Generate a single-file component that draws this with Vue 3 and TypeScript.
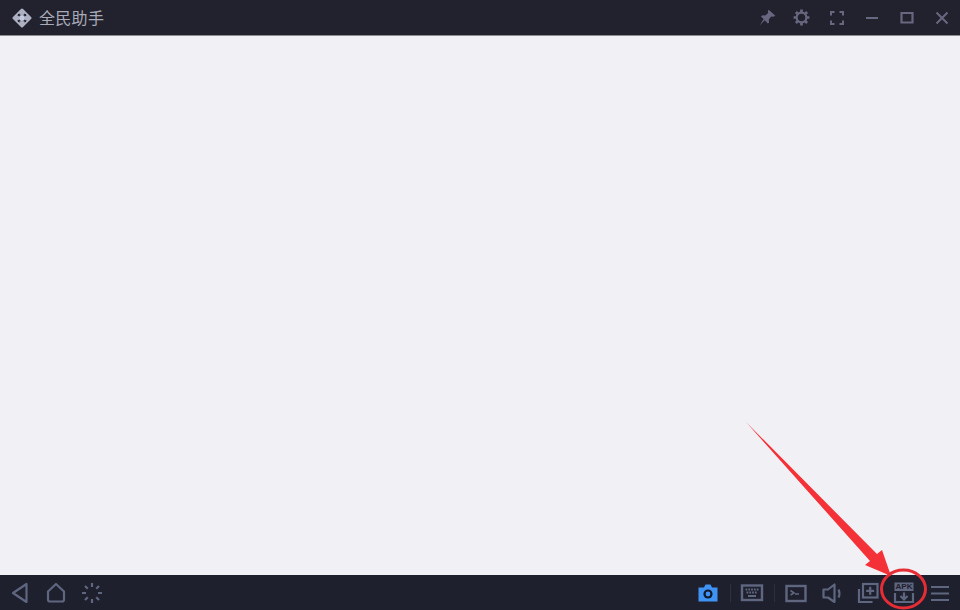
<template>
  <div class="window">
    <header class="titlebar">
      <div class="brand">
        <svg class="logo" width="20" height="20" viewBox="0 0 20 20" aria-hidden="true">
          <path d="M10 2 18 10 10 18 2 10Z" fill="#aeb1c1" stroke="#aeb1c1" stroke-width="3" stroke-linejoin="round" />
          <path d="M5.800 6.800Q10 9 14.200 6.800M5.800 13.200Q10 11 14.200 13.200M6.800 5.800Q9 10 6.800 14.200M13.200 5.800Q11 10 13.200 14.200" fill="none" stroke="#22222f" stroke-width="1.600" />
          <circle cx="10" cy="10" r="3" fill="#c3c9de" />
        </svg>
        <span class="brand-name">全民助手</span>
      </div>
      <div class="window-tools">
        <button class="tool" aria-label="pin">
          <svg width="20" height="20" viewBox="0 0 18 18"><path d="M10.500 1.500 16.500 7 14.800 7.800 12.800 7.600 10.600 10.300 10.900 13 9.800 14 7 11 2.500 15.500 6 10 3.600 7.600 5 6.600 7.400 6.800 10 4.600 9.800 2.800Z" fill="#67677f" /></svg>
        </button>
        <button class="tool" aria-label="settings">
          <svg width="19" height="19" viewBox="0 0 18 18" fill="none" stroke="#67677f"><circle cx="9" cy="9" r="4.600" stroke-width="2" /><path d="M9 1.500V4M9 14V16.500M1.500 9H4M14 9H16.500M3.700 3.700 5.400 5.400M12.600 12.600 14.300 14.300M3.700 14.300 5.400 12.600M12.600 5.400 14.300 3.700" stroke-width="2.600" /></svg>
        </button>
        <button class="tool" aria-label="fullscreen">
          <svg width="18" height="18" viewBox="0 0 18 18" fill="none" stroke="#67677f" stroke-width="2"><path d="M3 6.500V3H6.500M11.500 3H15V6.500M15 11.500V15H11.500M6.500 15H3V11.500" /></svg>
        </button>
        <button class="tool" aria-label="minimize">
          <svg width="18" height="18" viewBox="0 0 18 18" fill="none" stroke="#67677f" stroke-width="2"><path d="M3 9H15" /></svg>
        </button>
        <button class="tool" aria-label="maximize">
          <svg width="18" height="18" viewBox="0 0 18 18" fill="none" stroke="#67677f" stroke-width="2.200"><path d="M3.500 4H14.500V13.500H3.500Z" /></svg>
        </button>
        <button class="tool" aria-label="close">
          <svg width="18" height="18" viewBox="0 0 18 18" fill="none" stroke="#67677f" stroke-width="2"><path d="M3.500 3.500 14.500 14.500M14.500 3.500 3.500 14.500" /></svg>
        </button>
      </div>
    </header>

    <main class="screen"></main>

    <footer class="navbar">
      <div class="nav-left">
        <button class="nav-btn side" aria-label="back">
          <svg width="24" height="24" viewBox="0 0 24 24" fill="none" stroke="#5f6680" stroke-width="2.200"><path d="M19.500 3V21L6 12Z" stroke-linejoin="round" /></svg>
        </button>
        <button class="nav-btn side" aria-label="home">
          <svg width="24" height="24" viewBox="0 0 24 24" fill="none" stroke="#5f6680" stroke-width="2.200"><path d="M4 10.500 12 3 20 10.500V18.500Q20 20.500 18 20.500H6Q4 20.500 4 18.500Z" stroke-linejoin="round" /></svg>
        </button>
        <button class="nav-btn side" aria-label="recent">
          <svg width="24" height="24" viewBox="0 0 24 24" fill="none" stroke="#5f6680" stroke-width="2.200"><path d="M12 2V6M12 18V22M2 12H6M18 12H22M5 5 7.800 7.800M16.200 16.200 19 19M5 19 7.800 16.200M16.200 7.800 19 5" /></svg>
        </button>
      </div>
      <div class="nav-right">
        <button class="nav-btn" aria-label="screenshot">
          <svg width="24" height="24" viewBox="0 0 24 24"><path d="M2.500 6.500H8L9.500 3.500H14.500L16 6.500H21.500V20.500H2.500Z" fill="#3f93f4" /><circle cx="12" cy="13" r="4.600" fill="#12182a" /><circle cx="12" cy="13" r="2.400" fill="#3f93f4" /></svg>
        </button>
        <span class="sep"></span>
        <button class="nav-btn" aria-label="keyboard">
          <svg width="24" height="24" viewBox="0 0 24 24" fill="none" stroke="#5f6680"><rect x="2" y="4.500" width="20" height="14.500" stroke-width="2.400" /><path d="M5.500 8.500H18.500M6.500 11.500H17.500" stroke-width="1.800" stroke-dasharray="1.800 1" /><path d="M8 15H16" stroke-width="2" /></svg>
        </button>
        <span class="sep"></span>
        <button class="nav-btn" aria-label="console">
          <svg width="24" height="24" viewBox="0 0 24 24" fill="none" stroke="#5f6680" stroke-width="2.400"><rect x="2.500" y="5" width="19" height="15" /><path d="M6.500 9.500 10 12 6.500 14M11 13H15" stroke-width="1.600" /></svg>
        </button>
        <button class="nav-btn" aria-label="volume">
          <svg width="24" height="24" viewBox="0 0 24 24" fill="none" stroke="#5f6680" stroke-width="2.200"><path d="M3.500 8.500H8L14.500 3.500V21L8 16.500H3.500Z" stroke-linejoin="round" /><path d="M18.500 8.500Q20.500 12.500 18.500 16.500" /></svg>
        </button>
        <button class="nav-btn" aria-label="add app">
          <svg width="24" height="24" viewBox="0 0 24 24" fill="none" stroke="#5f6680" stroke-width="2.200"><rect x="7" y="3" width="14.500" height="13.500" /><path d="M3 8V21H16.500" /><path d="M14.200 5.800V13.800M10.200 9.800H18.200" /></svg>
        </button>
        <button class="nav-btn" aria-label="install apk">
          <svg width="24" height="24" viewBox="0 0 24 24" fill="none" stroke="#5f6680"><rect x="2.500" y="1.500" width="19" height="8.500" fill="#5f6680" stroke="none" /><path d="M3 12V21H21V12" stroke-width="2.200" /><path d="M12 11.500V18M8.500 15 12 18.500 15.500 15" stroke-width="2.200" /></svg>
          <span class="apk-label">APK</span>
        </button>
        <button class="nav-btn" aria-label="menu">
          <svg width="24" height="24" viewBox="0 0 24 24" fill="none" stroke="#5f6680" stroke-width="2.200"><path d="M3 6H21M3 12.500H21M3 19H21" /></svg>
        </button>
      </div>
    </footer>

    <!-- red annotation drawn on top of the screenshot -->
    <svg class="annotation" width="960" height="610" viewBox="0 0 960 610" aria-hidden="true">
      <path d="M746 422 877 554 882 550 891 576 865 565 870 561Z" fill="#f53138" />
      <ellipse cx="903.500" cy="589" rx="22" ry="19" fill="none" stroke="#e62c35" stroke-width="3" />
    </svg>
  </div>
</template>

<script setup lang="ts"></script>

<style scoped>
.window {
  position: relative;
  width: 960px;
  height: 610px;
  display: flex;
  flex-direction: column;
  overflow: hidden;
  font-family: "Noto Sans CJK SC", "Liberation Sans", sans-serif;
}

.titlebar {
  height: 35px;
  flex: none;
  display: flex;
  align-items: center;
  justify-content: space-between;
  background: #22222f;
  border-bottom: 1px solid #8c8c94;
}

.brand {
  display: flex;
  align-items: center;
  gap: 7px;
  padding-left: 12px;
}

.logo {
  display: block;
}

.brand-name {
  font-size: 16px;
  line-height: 20px;
  letter-spacing: 0.3px;
  color: #a9abb8;
  margin-top: -2px;
}

.window-tools {
  display: flex;
  padding-right: 1px;
}

.tool {
  width: 35px;
  height: 35px;
  display: flex;
  align-items: center;
  justify-content: center;
  padding: 0;
  border: 0;
  background: transparent;
}

.screen {
  flex: 1;
  background: #f0f0f5;
}

.navbar {
  height: 35px;
  flex: none;
  display: flex;
  align-items: center;
  justify-content: space-between;
  background: #1f202d;
  padding: 0 2px 0 1px;
}

.nav-left,
.nav-right {
  display: flex;
  align-items: center;
}

.nav-btn {
  position: relative;
  width: 36px;
  height: 35px;
  display: flex;
  align-items: center;
  justify-content: center;
  padding: 0;
  border: 0;
  background: transparent;
}

.nav-btn.side {
  width: 36.5px;
}

.sep {
  width: 1px;
  height: 18px;
  margin: 0 3.5px;
  background: #2e3040;
}

.apk-label {
  position: absolute;
  left: 0;
  right: 0;
  top: 7px;
  text-align: center;
  font-family: "Liberation Sans", sans-serif;
  font-size: 8px;
  font-weight: 700;
  line-height: 9px;
  color: #1f202d;
}

.annotation {
  position: absolute;
  left: 0;
  top: 0;
  pointer-events: none;
}
</style>

<style>
html,
body {
  margin: 0;
  background: #f0f0f5;
}
</style>
